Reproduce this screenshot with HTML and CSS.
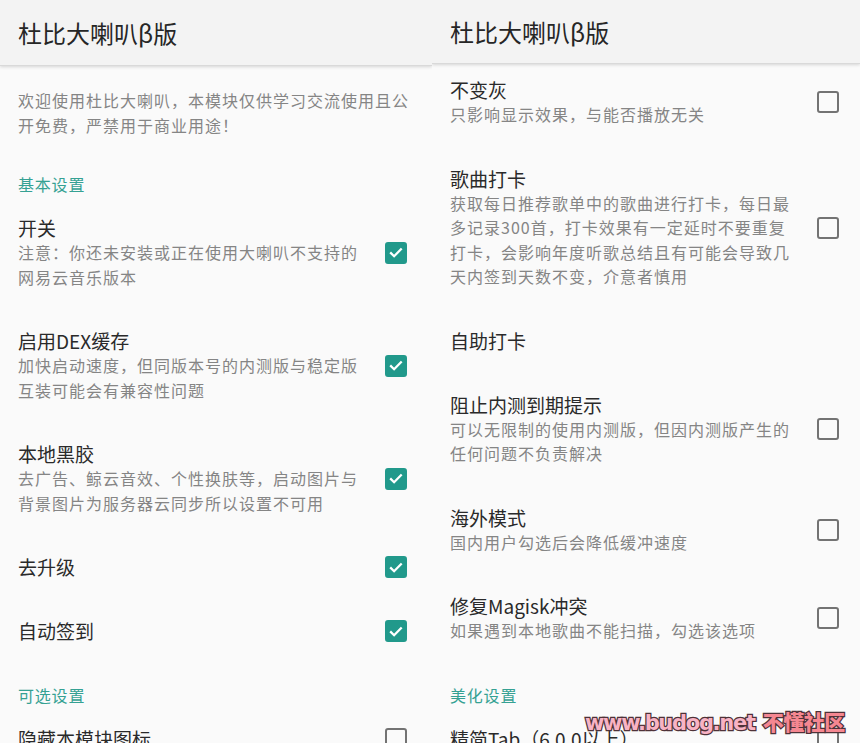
FILE: index.html
```html
<!DOCTYPE html>
<html lang="zh-CN">
<head>
    <meta charset="UTF-8">
    <meta name="viewport" content="width=device-width, initial-scale=1.0">
    <title>杜比大喇叭β版</title>
    <link rel="stylesheet" href="styles.css">
</head>
<body>
    <div class="screens">
        <section class="screen screen-left">
            <header class="appbar appbar-tall"><h1>杜比大喇叭β版</h1></header>
            <div class="list">
                <p class="intro">欢迎使用杜比大喇叭，本模块仅供学习交流使用且公开免费，严禁用于商业用途！</p>

                <div class="category">基本设置</div>
                <div class="pref">
                    <div class="pref-text">
                        <div class="pref-title">开关</div>
                        <div class="pref-summary">注意：你还未安装或正在使用大喇叭不支持的网易云音乐版本</div>
                    </div>
                    <span class="checkbox checked"><svg viewBox="0 0 22 22"><path d="M5.2 11.4l3.9 3.8 7.6-7.7"/></svg></span>
                </div>
                <div class="pref">
                    <div class="pref-text">
                        <div class="pref-title">启用DEX缓存</div>
                        <div class="pref-summary">加快启动速度，但同版本号的内测版与稳定版互装可能会有兼容性问题</div>
                    </div>
                    <span class="checkbox checked"><svg viewBox="0 0 22 22"><path d="M5.2 11.4l3.9 3.8 7.6-7.7"/></svg></span>
                </div>
                <div class="pref">
                    <div class="pref-text">
                        <div class="pref-title">本地黑胶</div>
                        <div class="pref-summary">去广告、鲸云音效、个性换肤等，启动图片与背景图片为服务器云同步所以设置不可用</div>
                    </div>
                    <span class="checkbox checked"><svg viewBox="0 0 22 22"><path d="M5.2 11.4l3.9 3.8 7.6-7.7"/></svg></span>
                </div>
                <div class="pref">
                    <div class="pref-text">
                        <div class="pref-title">去升级</div>
                    </div>
                    <span class="checkbox checked"><svg viewBox="0 0 22 22"><path d="M5.2 11.4l3.9 3.8 7.6-7.7"/></svg></span>
                </div>
                <div class="pref">
                    <div class="pref-text">
                        <div class="pref-title">自动签到</div>
                    </div>
                    <span class="checkbox checked"><svg viewBox="0 0 22 22"><path d="M5.2 11.4l3.9 3.8 7.6-7.7"/></svg></span>
                </div>

                <div class="category">可选设置</div>
                <div class="pref">
                    <div class="pref-text">
                        <div class="pref-title">隐藏本模块图标</div>
                    </div>
                    <span class="checkbox"></span>
                </div>
            </div>
        </section>

        <section class="screen screen-right">
            <header class="appbar"><h1>杜比大喇叭β版</h1></header>
            <div class="list">
                <div class="pref pref-first">
                    <div class="pref-text">
                        <div class="pref-title">不变灰</div>
                        <div class="pref-summary">只影响显示效果，与能否播放无关</div>
                    </div>
                    <span class="checkbox"></span>
                </div>
                <div class="pref">
                    <div class="pref-text">
                        <div class="pref-title">歌曲打卡</div>
                        <div class="pref-summary">获取每日推荐歌单中的歌曲进行打卡，每日最多记录300首，打卡效果有一定延时不要重复打卡，会影响年度听歌总结且有可能会导致几天内签到天数不变，介意者慎用</div>
                    </div>
                    <span class="checkbox"></span>
                </div>
                <div class="pref">
                    <div class="pref-text">
                        <div class="pref-title">自助打卡</div>
                    </div>
                </div>
                <div class="pref">
                    <div class="pref-text">
                        <div class="pref-title">阻止内测到期提示</div>
                        <div class="pref-summary">可以无限制的使用内测版，但因内测版产生的任何问题不负责解决</div>
                    </div>
                    <span class="checkbox"></span>
                </div>
                <div class="pref">
                    <div class="pref-text">
                        <div class="pref-title">海外模式</div>
                        <div class="pref-summary">国内用户勾选后会降低缓冲速度</div>
                    </div>
                    <span class="checkbox"></span>
                </div>
                <div class="pref">
                    <div class="pref-text">
                        <div class="pref-title">修复Magisk冲突</div>
                        <div class="pref-summary">如果遇到本地歌曲不能扫描，勾选该选项</div>
                    </div>
                    <span class="checkbox"></span>
                </div>

                <div class="category">美化设置</div>
                <div class="pref">
                    <div class="pref-text">
                        <div class="pref-title">精简Tab（6.0.0以上）</div>
                    </div>
                    <span class="checkbox"></span>
                </div>
            </div>
            <div class="watermark">www.budog.net <span class="watermark-cn">不懂社区</span></div>
        </section>
    </div>
</body>
</html>
```

FILE: styles.css
```css
body {
    margin: 0;
    background-color: #fafafa;
    font-family: "Noto Sans CJK SC", "Noto Sans", sans-serif;
}
.screens {
    display: flex;
    width: 860px;
    height: 743px;
    overflow: hidden;
}
.screen {
    position: relative;
    height: 743px;
    overflow: hidden;
    background-color: #fafafa;
}
.screen-left {
    width: 432px;
}
.screen-right {
    width: 428px;
}
.appbar {
    position: relative;
    z-index: 1;
    height: 64px;
    display: flex;
    align-items: center;
    padding: 0 18px;
    background-color: #f3f3f3;
    border-bottom: 1px solid #d9d9d9;
    box-shadow: 0 1px 3px rgba(0, 0, 0, 0.15);
    box-sizing: border-box;
}
.appbar-tall {
    height: 66px;
}
.appbar h1 {
    margin: 0;
    font-size: 24px;
    font-weight: 400;
    color: #262626;
}
.list {
    padding-left: 18px;
}
.intro {
    margin: 0;
    padding: 22px 18px 15px 0;
    font-size: 16px;
    letter-spacing: 1px;
    line-height: 24.5px;
    color: #858585;
}
.category {
    padding-top: 20px;
    font-size: 16px;
    letter-spacing: 0.8px;
    line-height: 24px;
    color: #35a193;
}
.pref {
    display: flex;
    align-items: center;
    padding: 20px 0;
}
.pref-first {
    padding-top: 14px;
}
.pref-text {
    width: 350px;
}
.pref-title {
    font-size: 19px;
    line-height: 24px;
    color: #2a2a2a;
}
.pref-summary {
    font-size: 16px;
    letter-spacing: 1px;
    line-height: 24.5px;
    color: #858585;
}
.checkbox {
    width: 22px;
    height: 22px;
    margin-left: 17px;
    border: 2.5px solid #737373;
    border-radius: 3px;
    box-sizing: border-box;
}
.checkbox.checked {
    background-color: #21998b;
    border-color: #21998b;
}
.checkbox svg {
    display: block;
    width: 22px;
    height: 22px;
    margin: -2.5px;
    fill: none;
    stroke: #ffffff;
    stroke-width: 2.3;
}
.watermark {
    position: absolute;
    left: 153px;
    top: 706px;
    font-family: "DejaVu Sans", sans-serif;
    font-size: 21px;
    font-weight: 700;
    letter-spacing: -1.3px;
    color: #f8b3c4;
    -webkit-text-stroke: 2.5px #4e3238;
    paint-order: stroke fill;
    white-space: nowrap;
}
.watermark-cn {
    margin-left: 2px;
    font-family: "Noto Sans CJK SC", sans-serif;
    font-size: 21px;
    font-weight: 900;
    letter-spacing: -0.5px;
    color: #f58791;
}
```
